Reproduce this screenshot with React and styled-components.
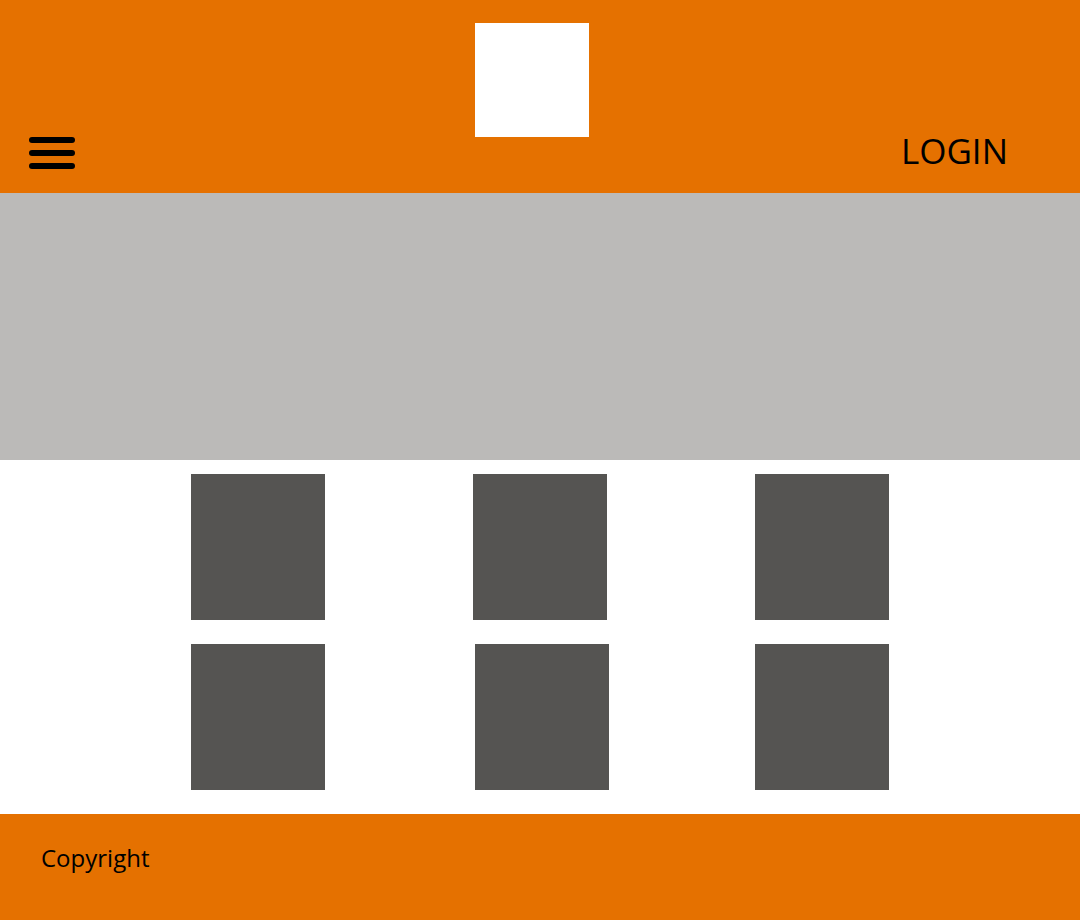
import styled, { createGlobalStyle } from "styled-components";

const GlobalStyle = createGlobalStyle`
  html, body {
    margin: 0;
    padding: 0;
    background: #ffffff;
    font-family: "Open Sans", "Noto Sans", sans-serif;
  }
`;

const StPage = styled.div`
  width: 1080px;
  display: flex;
  flex-direction: column;
`;

const StHeader = styled.header`
  height: 193px;
  box-sizing: border-box;
  padding: 0 45px 0 29px;
  display: grid;
  grid-template-columns: 1fr 114px 1fr;
  background-color: #e57100;
`;

const StMenuButton = styled.div`
  align-self: start;
  margin-top: 137px;
  width: 46px;
  display: flex;
  flex-direction: column;
  gap: 7px;
`;

const StMenuLine = styled.span`
  display: block;
  height: 6px;
  border-radius: 3px;
  background-color: #000;
`;

const StLogo = styled.div`
  margin-top: 23px;
  width: 114px;
  height: 114px;
  background-color: #ffffff;
`;

const StLogin = styled.div`
  justify-self: end;
  align-self: start;
  margin-top: 128px;
  margin-right: 27px;
  font-size: 35px;
  line-height: 46px;
  color: #000;
`;

const StBanner = styled.div`
  height: 267px;
  background-color: #bbbab8;
`;

const StGrid = styled.div`
  padding: 14px 0 24px;
  display: grid;
  grid-template-columns: repeat(3, 134px);
  column-gap: 148px;
  row-gap: 24px;
  justify-content: center;
`;

const StTile = styled.div`
  width: 134px;
  height: 146px;
  margin-left: ${(props) => props.$shift || 0}px;
  background-color: #555452;
`;

const StFooter = styled.footer`
  height: 106px;
  box-sizing: border-box;
  padding: 28px 0 0 41px;
  background-color: #e57100;
`;

const StCopyright = styled.div`
  font-size: 24px;
  line-height: 32px;
  color: #000;
`;

const tiles = [0, 0, 0, 0, 2, 0];

const App = () => {
  return (
    <>
      <GlobalStyle />
      <StPage>
        <StHeader>
          <StMenuButton>
            <StMenuLine />
            <StMenuLine />
            <StMenuLine />
          </StMenuButton>
          <StLogo />
          <StLogin>LOGIN</StLogin>
        </StHeader>
        <StBanner />
        <StGrid>
          {tiles.map((shift, i) => (
            <StTile key={i} $shift={shift} />
          ))}
        </StGrid>
        <StFooter>
          <StCopyright>Copyright</StCopyright>
        </StFooter>
      </StPage>
    </>
  );
};

export default App;
